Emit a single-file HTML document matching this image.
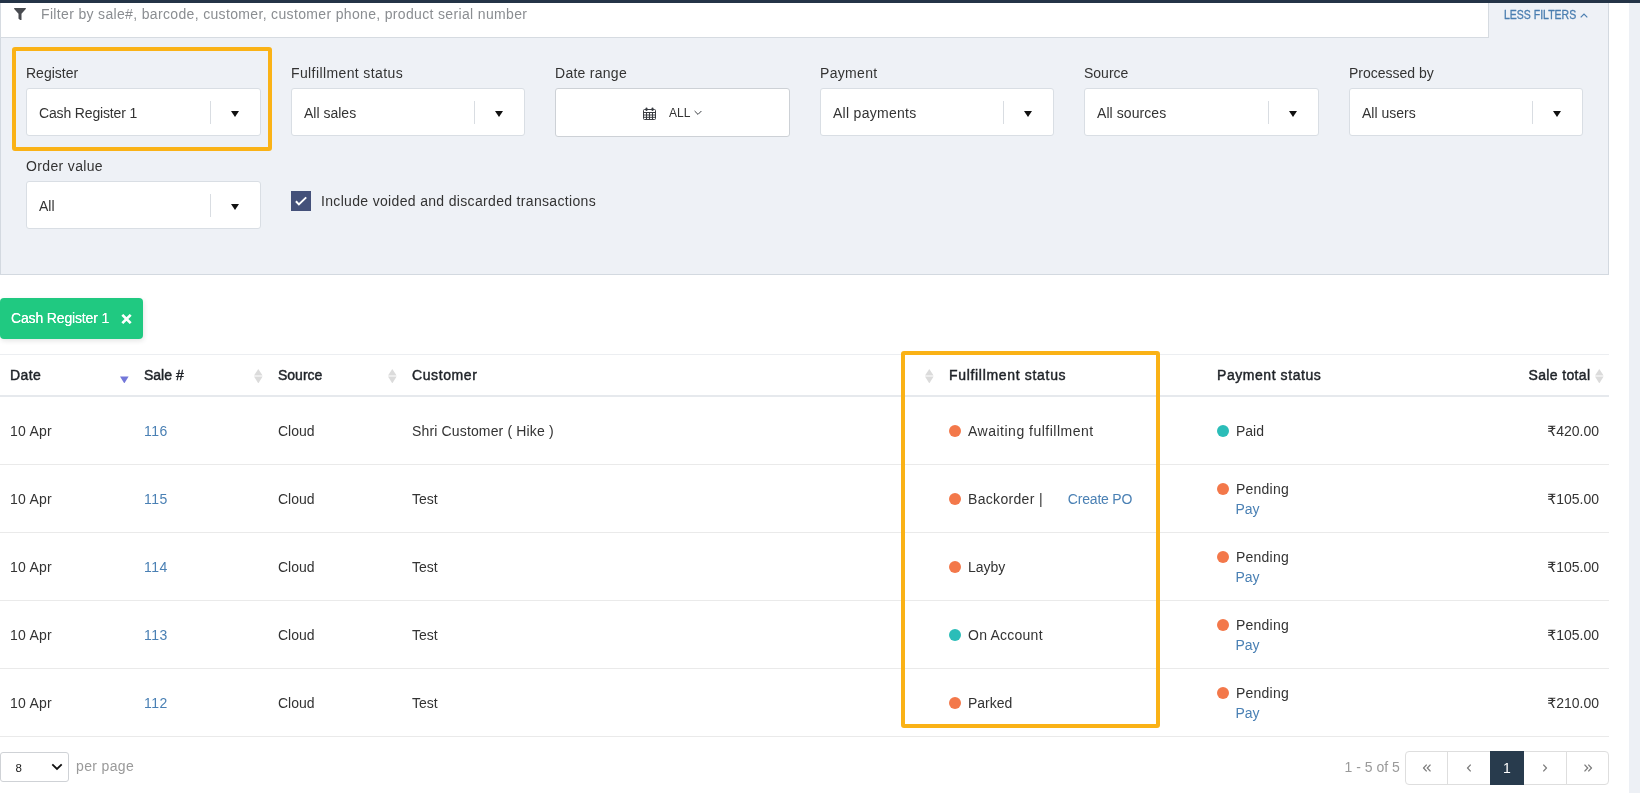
<!DOCTYPE html>
<html lang="en">
<head>
<meta charset="utf-8">
<title>Sales history</title>
<style>
*{box-sizing:border-box;margin:0;padding:0}
html,body{width:1640px;height:793px;overflow:hidden;background:#fff}
body{position:relative;will-change:transform;font-family:"Liberation Sans","DejaVu Sans",sans-serif;font-size:14px;color:#333}
.abs{position:absolute}
.topbar{left:0;top:0;width:1640px;height:3px;background:#243447}
.strip{left:1629px;top:3px;width:11px;height:790px;background:#edf0f5}
.panel{left:0;top:3px;width:1609px;height:272px;background:#eef1f6;border:1px solid #d3d9e0;border-top:0}
.search{left:0;top:3px;width:1489px;height:35px;background:#fff;border:1px solid #d6dbe1;border-top:0}
.search .ph{position:absolute;left:40px;top:0;line-height:22px;color:#8a8d91;white-space:nowrap;letter-spacing:.34px}
.less{left:1504px;top:7px;font-size:12px;line-height:16px;color:#4a7eb0;font-weight:400;white-space:nowrap;transform:scaleX(.875);transform-origin:0 0;-webkit-text-stroke:.3px #4a7eb0}
.lbl{position:absolute;line-height:20px;color:#333;white-space:nowrap}
.sel{position:absolute;width:235px;height:48px;background:#fff;border:1px solid #d9dee4;border-radius:3px}
.sel .v{position:absolute;left:12px;top:1px;line-height:47px;color:#333;white-space:nowrap}
.sel .d{position:absolute;right:49px;top:12px;width:1px;height:23px;background:#d9dde2}
.sel .a{position:absolute;right:21.500px;top:21.500px;width:0;height:0;border-left:4px solid transparent;border-right:4px solid transparent;border-top:6.500px solid #111}
.hl{position:absolute;border:4px solid #fab216;border-radius:3px}

.tag{left:0;top:298px;width:143px;height:41px;background:#20c981;border-radius:4px;box-shadow:1px 2px 5px rgba(0,0,0,.10);color:#fff}
.tag span{position:absolute;left:11px;top:0;line-height:41px;white-space:nowrap;letter-spacing:-.15px;font-weight:400;text-shadow:0 0 .6px #fff}
table.grid{position:absolute;left:0;top:354px;width:1609px;border-collapse:collapse;table-layout:fixed}
table.grid th{height:41px;text-align:left;font-weight:400;-webkit-text-stroke:.45px #1f2328;color:#1f2328;padding:0 0 0 10px;border-top:1px solid #eceef1;border-bottom:2px solid #e6e9ed;position:relative;white-space:nowrap;vertical-align:middle}
table.grid td{height:68px;padding:2px 0 0 10px;line-height:20px;border-bottom:1px solid #eaeaea;color:#333;white-space:nowrap;vertical-align:middle;position:relative}
table.grid a{color:#4a80b4;text-decoration:none}
table.grid td:nth-child(2) a{letter-spacing:.5px}
.dot{display:inline-block;width:12px;height:12px;border-radius:50%;background:#f3784a;vertical-align:-1px;margin-right:7px}
.dot.t{background:#2bbdb8}
.so{position:absolute;right:5.200px;top:13.800px;width:8.600px;height:14.400px}
table.grid td.p{padding-top:0}
.pay{line-height:20px}
.pay a{margin-left:18.500px}
table.grid tbody tr:first-child td{height:69px}
table.grid tbody tr:not(:first-child) td{padding-top:0}
.r{text-align:right!important;padding-right:10px!important}

.pp{left:0;top:752px;width:69px;height:30px;border:1px solid #cfd2d6;border-radius:3px;background:#fff}
.pp span{position:absolute;left:14.500px;top:1px;line-height:28px;font-size:11.500px;color:#222}
.ppl{left:76px;top:756px;line-height:20px;color:#9a9a9a;white-space:nowrap;letter-spacing:.35px}
.cnt{left:1344.500px;top:757px;line-height:20px;color:#9a9a9a;white-space:nowrap}
.pg{left:1406px;top:751px;width:203px;height:34px}
.pg b{position:absolute;top:0;display:block;height:34px;width:43px;border:1px solid #dedede;background:#fff;font-weight:400;text-align:center;line-height:32px;color:#8b8b8b}
.pg b.on{background:#283b4d;border-color:#283b4d;color:#fff;font-size:14px}
.pg svg{position:absolute;left:50%;top:50%;transform:translate(-50%,-50%)}
</style>
</head>
<body>
<div class="abs panel"></div>
<div class="abs search">
  <svg class="abs" style="left:13px;top:4.500px" width="12" height="12.500" viewBox="0 0 12 12.500"><path d="M0.700 0h10.600c.6 0 .9.700.5 1.100L7.500 5.800v6c0 .5-.5.800-.9.500L4.900 11c-.3-.2-.4-.4-.4-.7V5.800L.2 1.100C-.2.700.1 0 .7 0z" fill="#484b50"/></svg>
  <span class="ph">Filter by sale#, barcode, customer, customer phone, product serial number</span>
</div>
<div class="abs less">LESS FILTERS</div>
<svg class="abs" style="left:1579.500px;top:12.500px" width="8" height="5" viewBox="0 0 8 5"><path d="M0.700 4.300L4 1l3.300 3.300" fill="none" stroke="#4a7eb0" stroke-width="1.200"/></svg>

<!-- filter fields -->
<div class="abs hl" style="left:12px;top:47px;width:260px;height:104px"></div>
<div class="lbl" style="left:26px;top:63px">Register</div>
<div class="sel" style="left:26px;top:88px"><span class="v" style="letter-spacing:-.15px">Cash Register 1</span><i class="d"></i><i class="a"></i></div>
<div class="lbl" style="left:291px;top:63px;letter-spacing:.39px">Fulfillment status</div>
<div class="sel" style="left:291px;top:88px;width:234px"><span class="v">All sales</span><i class="d"></i><i class="a"></i></div>
<div class="lbl" style="left:555px;top:63px;letter-spacing:.27px">Date range</div>
<div class="sel date" style="left:555px;top:88px;height:49px;border-color:#cdd1d6">
  <svg class="abs" style="left:87px;top:18px" width="13" height="13" viewBox="0 0 13 13"><g fill="none" stroke="#3a3d42" stroke-width="1"><rect x="0.500" y="2.500" width="12" height="10" rx="1"/><path d="M0.500 5.500h12M0.500 8h12M0.500 10.300h12M3.500 5.500v7M6.500 5.500v7M9.500 5.500v7"/></g><rect x="2.500" y="0.500" width="2" height="3.500" rx="1" fill="#3a3d42"/><rect x="8.500" y="0.500" width="2" height="3.500" rx="1" fill="#3a3d42"/></svg>
  <span class="abs" style="left:113px;top:0;line-height:48px;font-size:12px;color:#333">ALL</span>
  <svg class="abs" style="left:138px;top:21px" width="8" height="6" viewBox="0 0 8 6"><path d="M0.600 1l3.400 3.400L7.400 1" fill="none" stroke="#3a3d42" stroke-width="1"/></svg>
</div>
<div class="lbl" style="left:820px;top:63px;letter-spacing:.33px">Payment</div>
<div class="sel" style="left:820px;top:88px;width:234px"><span class="v" style="letter-spacing:.28px">All payments</span><i class="d"></i><i class="a"></i></div>
<div class="lbl" style="left:1084px;top:63px">Source</div>
<div class="sel" style="left:1084px;top:88px"><span class="v" style="letter-spacing:.07px">All sources</span><i class="d"></i><i class="a"></i></div>
<div class="lbl" style="left:1349px;top:63px">Processed by</div>
<div class="sel" style="left:1349px;top:88px;width:234px"><span class="v">All users</span><i class="d"></i><i class="a"></i></div>
<div class="lbl" style="left:26px;top:156px;letter-spacing:.35px">Order value</div>
<div class="sel" style="left:26px;top:181px;height:48px"><span class="v">All</span><i class="d"></i><i class="a"></i></div>
<div class="abs" style="left:291px;top:191px;width:20px;height:20px;background:#44517a">
  <svg width="20" height="20" viewBox="0 0 20 20"><path d="M4.900 10.300L7.900 13.400 15.200 6.400" fill="none" stroke="#fff" stroke-width="2"/></svg>
</div>
<div class="lbl" style="left:321px;top:191px;letter-spacing:.33px">Include voided and discarded transactions</div>

<!-- tag + table -->
<div class="abs tag"><span>Cash Register 1</span>
  <svg class="abs" style="left:121px;top:15.500px" width="11" height="10" viewBox="0 0 11 10"><path d="M1.300 0.900L9.700 9.100M9.700 0.900L1.300 9.100" stroke="#fff" stroke-width="2.700" fill="none"/></svg>
</div>
<table class="grid">
<colgroup><col style="width:134px"><col style="width:134px"><col style="width:134px"><col style="width:537px"><col style="width:268px"><col style="width:268px"><col></colgroup>
<thead><tr>
<th style="letter-spacing:.43px">Date<svg class="so" viewBox="0 0 8.600 14.400"><path d="M0 7.600h8.600L4.300 14.400z" fill="#7377d9"/></svg></th><th>Sale #<svg class="so" viewBox="0 0 8.600 14.400"><path d="M4.300 0L8.600 6.500H0z" fill="#dbdbdb"/><path d="M0 7.600h8.600L4.300 14.400z" fill="#dbdbdb"/></svg></th><th>Source<svg class="so" viewBox="0 0 8.600 14.400"><path d="M4.300 0L8.600 6.500H0z" fill="#dbdbdb"/><path d="M0 7.600h8.600L4.300 14.400z" fill="#dbdbdb"/></svg></th><th style="letter-spacing:.6px">Customer<svg class="so" viewBox="0 0 8.600 14.400"><path d="M4.300 0L8.600 6.500H0z" fill="#dbdbdb"/><path d="M0 7.600h8.600L4.300 14.400z" fill="#dbdbdb"/></svg></th><th style="letter-spacing:.68px">Fulfillment status</th><th style="letter-spacing:.56px">Payment status</th><th class="r" style="padding-right:18.500px!important;letter-spacing:.36px">Sale total<svg class="so" viewBox="0 0 8.600 14.400"><path d="M4.300 0L8.600 6.500H0z" fill="#dbdbdb"/><path d="M0 7.600h8.600L4.300 14.400z" fill="#dbdbdb"/></svg></th>
</tr></thead>
<tbody>
<tr><td style="letter-spacing:.25px">10 Apr</td><td><a>116</a></td><td>Cloud</td><td style="letter-spacing:.15px">Shri Customer ( Hike )</td><td><i class="dot"></i><span style="letter-spacing:.5px">Awaiting fulfillment</span></td><td><i class="dot t"></i>Paid</td><td class="r">₹420.00</td></tr>
<tr><td style="letter-spacing:.25px">10 Apr</td><td><a>115</a></td><td>Cloud</td><td>Test</td><td><i class="dot"></i><span style="letter-spacing:.32px">Backorder |</span><a style="margin-left:25px;letter-spacing:-.2px">Create PO</a></td><td class="p"><div class="pay"><i class="dot"></i><span style="letter-spacing:.23px">Pending</span><br><a>Pay</a></div></td><td class="r">₹105.00</td></tr>
<tr><td style="letter-spacing:.25px">10 Apr</td><td><a>114</a></td><td>Cloud</td><td>Test</td><td><i class="dot"></i>Layby</td><td class="p"><div class="pay"><i class="dot"></i><span style="letter-spacing:.23px">Pending</span><br><a>Pay</a></div></td><td class="r">₹105.00</td></tr>
<tr><td style="letter-spacing:.25px">10 Apr</td><td><a>113</a></td><td>Cloud</td><td>Test</td><td><i class="dot t"></i><span style="letter-spacing:.24px">On Account</span></td><td class="p"><div class="pay"><i class="dot"></i><span style="letter-spacing:.23px">Pending</span><br><a>Pay</a></div></td><td class="r">₹105.00</td></tr>
<tr><td style="letter-spacing:.25px">10 Apr</td><td><a>112</a></td><td>Cloud</td><td>Test</td><td><i class="dot"></i>Parked</td><td class="p"><div class="pay"><i class="dot"></i><span style="letter-spacing:.23px">Pending</span><br><a>Pay</a></div></td><td class="r">₹210.00</td></tr>
</tbody></table>
<div class="abs hl" style="left:901px;top:351px;width:259px;height:377px"></div>

<!-- footer -->
<div class="abs pp"><span>8</span>
  <svg class="abs" style="left:49.500px;top:10px" width="12" height="8" viewBox="0 0 12 8"><path d="M1.300 1.300L6 6l4.700-4.700" fill="none" stroke="#111" stroke-width="1.800"/></svg>
</div>
<div class="abs ppl">per page</div>
<div class="abs cnt">1 - 5 of 5</div>
<div class="abs pg">
  <b style="left:-1px;border-radius:4px 0 0 4px"><svg width="9" height="8" viewBox="0 0 9 8"><path d="M4.200 0.600L1 4l3.200 3.400M8 0.600L4.800 4 8 7.400" fill="none" stroke="#7d7d7d" stroke-width="1.300"/></svg></b>
  <b style="left:41px;width:44px"><svg width="5" height="8" viewBox="0 0 5 8"><path d="M4.200 0.600L1 4l3.200 3.400" fill="none" stroke="#7d7d7d" stroke-width="1.300"/></svg></b>
  <b style="left:117px;width:44px"><svg width="5" height="8" viewBox="0 0 5 8"><path d="M0.800 0.600L4 4 .800 7.400" fill="none" stroke="#7d7d7d" stroke-width="1.300"/></svg></b>
  <b style="left:160px;border-radius:0 4px 4px 0"><svg width="9" height="8" viewBox="0 0 9 8"><path d="M1 0.600L4.200 4 1 7.400M4.800 0.600L8 4 4.800 7.400" fill="none" stroke="#7d7d7d" stroke-width="1.300"/></svg></b>
  <b class="on" style="left:84px;width:34px">1</b>
</div>
<div class="abs topbar"></div>
<div class="abs strip"></div>
</body>
</html>
